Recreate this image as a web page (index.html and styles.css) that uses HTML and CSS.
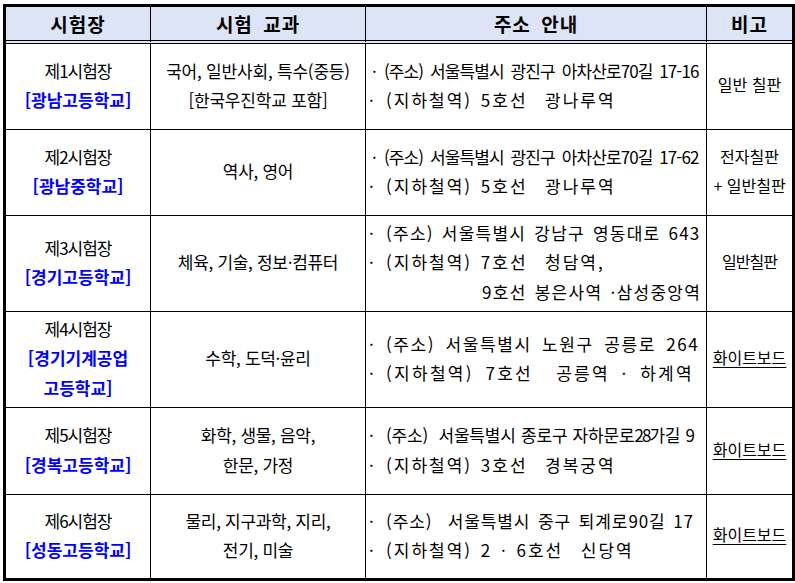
FILE: index.html
```html
<!DOCTYPE html>
<html lang="ko">
<head>
<meta charset="utf-8">
<link rel="stylesheet" href="styles.css">
</head>
<body>
<div class="tbl">
  <div class="cell hd">시험장</div>
  <div class="cell hd">시험 교과</div>
  <div class="cell hd">주소 안내</div>
  <div class="cell hd last">비고</div>

  <div class="cell c"><div class="nm">제1시험장</div><div class="sch">[광남고등학교]</div></div>
  <div class="cell c"><div class="tight">국어, 일반사회, 특수(중등)</div><div class="tight">[한국우진학교 포함]</div></div>
  <div class="cell addr">
    <div class="ln cond"><span class="b">·</span>(주소) 서울특별시 광진구 아차산로70길 17-16</div>
    <div class="ln sub"><span class="b">·</span>(지하철역) 5호선  광나루역</div>
  </div>
  <div class="cell c last note"><div>일반 칠판</div></div>

  <div class="cell c"><div class="nm">제2시험장</div><div class="sch">[광남중학교]</div></div>
  <div class="cell c"><div class="subj">역사, 영어</div></div>
  <div class="cell addr">
    <div class="ln cond"><span class="b">·</span>(주소) 서울특별시 광진구 아차산로70길 17-62</div>
    <div class="ln sub"><span class="b">·</span>(지하철역) 5호선  광나루역</div>
  </div>
  <div class="cell c last note"><div>전자칠판</div><div>+ 일반칠판</div></div>

  <div class="cell c"><div class="nm">제3시험장</div><div class="sch">[경기고등학교]</div></div>
  <div class="cell c"><div class="subj">체육, 기술, 정보·컴퓨터</div></div>
  <div class="cell addr">
    <div class="ln a3"><span class="b">·</span>(주소) 서울특별시 강남구 영동대로 643</div>
    <div class="ln sub"><span class="b">·</span>(지하철역) 7호선  청담역,</div>
    <div class="ln indent">9호선 봉은사역 ·삼성중앙역</div>
  </div>
  <div class="cell c last note"><div class="tight">일반칠판</div></div>

  <div class="cell c"><div class="nm">제4시험장</div><div class="sch">[경기기계공업</div><div class="sch">고등학교]</div></div>
  <div class="cell c"><div class="subj">수학, 도덕·윤리</div></div>
  <div class="cell addr">
    <div class="ln a4"><span class="b">·</span>(주소) 서울특별시 노원구 공릉로 264</div>
    <div class="ln s4"><span class="b">·</span>(지하철역) 7호선  공릉역 · 하계역</div>
  </div>
  <div class="cell c last note"><div class="wb">화이트보드</div></div>

  <div class="cell c"><div class="nm">제5시험장</div><div class="sch">[경복고등학교]</div></div>
  <div class="cell c"><div class="subj">화학, 생물, 음악,</div><div class="subj">한문, 가정</div></div>
  <div class="cell addr">
    <div class="ln a5"><span class="b">·</span>(주소)  서울특별시 종로구 자하문로<span class="dg">28</span>가길 9</div>
    <div class="ln sub"><span class="b">·</span>(지하철역) 3호선  경복궁역</div>
  </div>
  <div class="cell c last note"><div class="wb">화이트보드</div></div>

  <div class="cell c bot"><div class="nm">제6시험장</div><div class="sch">[성동고등학교]</div></div>
  <div class="cell c bot"><div class="subj">물리, 지구과학, 지리,</div><div class="subj">전기, 미술</div></div>
  <div class="cell addr bot">
    <div class="ln a6"><span class="b">·</span>(주소)  서울특별시 중구 퇴계로90길 17</div>
    <div class="ln sub"><span class="b">·</span>(지하철역) 2 · 6호선  신당역</div>
  </div>
  <div class="cell c last bot note"><div class="wb">화이트보드</div></div>
</div>
</body>
</html>
```
FILE: styles.css
```css
html, body {
  margin: 0;
  padding: 0;
  background: #ffffff;
}
body {
  font-family: "Noto Sans CJK KR", "Noto Sans", sans-serif;
  color: #000000;
  font-size: 17px;
}
.tbl {
  margin: 4px 0 0 3px;
  width: 792px;
  box-sizing: border-box;
  border: 3px solid #000;
  display: grid;
  grid-template-columns: 145px 215px 341px 85px;
  grid-template-rows: 37px 86px 86px 96px 96px 87px 83px;
}
.cell {
  box-sizing: border-box;
  border-right: 1px solid #000;
  border-bottom: 1px solid #000;
  display: flex;
  flex-direction: column;
  justify-content: center;
  line-height: 29.5px;
  padding-bottom: 3px;
  white-space: pre;
  overflow: hidden;
}
.cell.last { border-right: none; }
.cell.bot { border-bottom: none; }
.hd {
  background: #dde4f6;
  border-bottom: 4px double #000;
  align-items: center;
  font-size: 19px;
  font-weight: 700;
  letter-spacing: 1px;
  word-spacing: 4px;
  line-height: 32px;
  padding-bottom: 0;
}
.c {
  align-items: center;
  text-align: center;
}
.nm { letter-spacing: -1px; }
.sch {
  color: #0000ff;
  font-weight: 700;
  letter-spacing: 0;
}
.subj { letter-spacing: -0.3px; }
.tight { letter-spacing: -0.2px; }
.note { font-size: 16px; }
.note .tight { letter-spacing: -1px; }
.addr {
  padding-left: 3px;
  align-items: flex-start;
}
.b {
  display: inline-block;
  width: 17px;
  letter-spacing: 0;
}
.cond .b { width: 12px; margin-left: 3px; }
.ln { letter-spacing: 1.2px; word-spacing: 2px; }
.ln.cond { letter-spacing: -0.9px; word-spacing: 3px; }
.ln.sub { letter-spacing: 2px; word-spacing: 2px; }
.ln.a3 { letter-spacing: 1.25px; word-spacing: 2px; }
.ln.a4 { letter-spacing: 1.6px; word-spacing: 4px; }
.ln.s4 { letter-spacing: 2.3px; word-spacing: 4.5px; }
.ln.a5 { letter-spacing: -0.15px; word-spacing: 0.5px; }
.ln.a6 { letter-spacing: 0.9px; word-spacing: 2px; }
.dg { letter-spacing: -2px; }
.indent { padding-left: 113px; letter-spacing: 1.3px; word-spacing: 2px; }
.wb { text-decoration: underline; text-underline-offset: 3px; }
```
